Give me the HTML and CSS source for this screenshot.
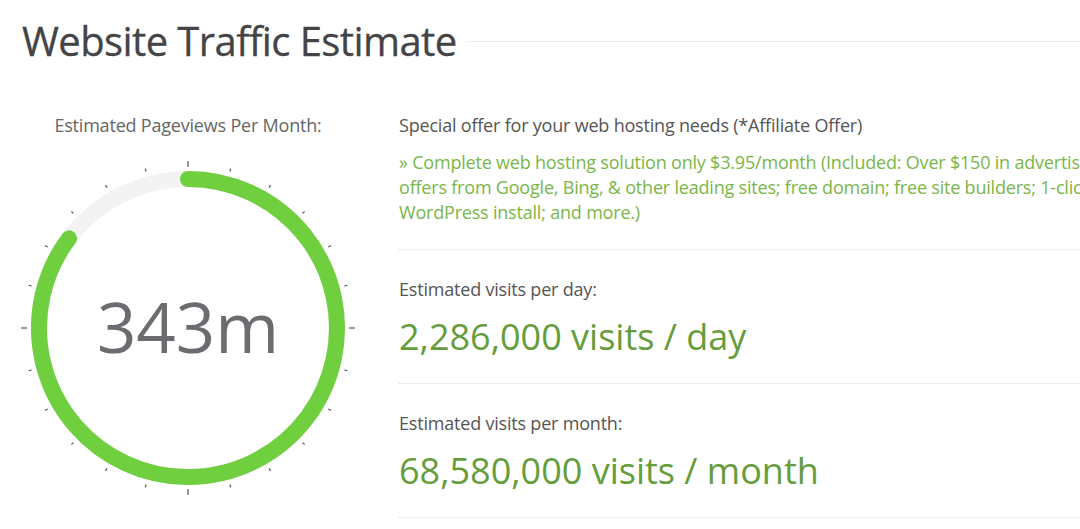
FILE: index.html
```html
<!DOCTYPE html>
<html>
<head>
<meta charset="utf-8">
<link rel="stylesheet" href="styles.css">
</head>
<body>
<div class="page">
  <div class="header">
    <h1 class="title">Website Traffic Estimate</h1>
    <div class="rule"></div>
  </div>
  <div class="main">
    <div class="left">
      <div class="gauge-label">Estimated Pageviews Per Month:</div>
      <div class="gauge">
        <svg width="340" height="340" viewBox="-170 -170 340 340">
          <g id="ticks" stroke="#555" stroke-width="1.2"></g>
          <circle r="149" fill="none" stroke="#f3f3f3" stroke-width="16"></circle>
          <path d="M 0 -149 A 149 149 0 1 1 -119.00 -89.67" fill="none" stroke="#6fcf3f" stroke-width="16" stroke-linecap="round"></path>
          <text x="0" y="25" text-anchor="middle" class="gauge-value">343m</text>
        </svg>
      </div>
    </div>
    <div class="right">
      <div class="section offer">
        <div class="offer-title">Special offer for your web hosting needs (*Affiliate Offer)</div>
        <div class="offer-text">» Complete web hosting solution only $3.95/month (Included: Over $150 in advertising<br>offers from Google, Bing, &amp; other leading sites; free domain; free site builders; 1-click<br>WordPress install; and more.)</div>
      </div>
      <div class="section stat">
        <div class="stat-label">Estimated visits per day:</div>
        <div class="stat-value">2,286,000 visits / day</div>
      </div>
      <div class="section stat">
        <div class="stat-label">Estimated visits per month:</div>
        <div class="stat-value">68,580,000 visits / month</div>
      </div>
    </div>
  </div>
</div>
<script src="script.js"></script>
</body>
</html>
```
FILE: styles.css
```css
html, body {
  margin: 0;
  padding: 0;
  background: #fff;
  overflow: hidden;
}
.page {
  width: 1080px;
  height: 529px;
  overflow: hidden;
  font-family: "Open Sans", "Noto Sans", sans-serif;
}
.header {
  display: flex;
  align-items: center;
  padding: 18px 0 0 22px;
  height: 46px;
}
.title {
  margin: 0;
  font-size: 40px;
  font-weight: 400;
  color: #444446;
  letter-spacing: -0.6px;
  white-space: nowrap;
  line-height: 46px;
  -webkit-text-stroke: 0.3px #444446;
}
.rule {
  flex: 1;
  height: 1px;
  background: #ececec;
  margin-left: 10px;
}
.main {
  display: flex;
  padding-top: 49px;
}
.left {
  width: 376px;
  flex: none;
  display: flex;
  flex-direction: column;
  align-items: center;
}
.gauge-label {
  font-size: 18px;
  color: #666;
  line-height: 24px;
  white-space: nowrap;
  letter-spacing: -0.2px;
}
.gauge {
  margin-top: 21px;
  width: 340px;
  height: 340px;
}
.gauge-value {
  font-family: "Open Sans", "Noto Sans", sans-serif;
  font-size: 69px;
  fill: #6c6c70;
}
.right {
  margin-left: 23px;
  width: 720px;
  flex: none;
}
.section {
  border-bottom: 1px dotted #dcdcdc;
}
.offer {
  padding-bottom: 24px;
}
.offer-title {
  font-size: 18px;
  color: #555;
  line-height: 24px;
  margin-bottom: 12.5px;
  white-space: nowrap;
  letter-spacing: -0.2px;
}
.offer-text {
  font-size: 18px;
  color: #7ab648;
  line-height: 25px;
  white-space: nowrap;
  letter-spacing: -0.2px;
}
.stat {
  padding-top: 27px;
  padding-bottom: 22px;
}
.stat-label {
  font-size: 18px;
  color: #555;
  line-height: 24px;
  letter-spacing: -0.2px;
}
.stat-value {
  font-size: 36px;
  color: #669d3c;
  line-height: 48px;
  margin-top: 12px;
}
```
FILE: script.js
```js
(function () {
  var g = document.getElementById('ticks');
  var ns = 'http://www.w3.org/2000/svg';
  for (var i = 0; i < 24; i++) {
    var a = i * 15 * Math.PI / 180;
    var major = i % 6 === 0;
    var r1 = major ? 161 : 162;
    var r2 = major ? 167 : 165;
    var l = document.createElementNS(ns, 'line');
    l.setAttribute('x1', (Math.sin(a) * r1).toFixed(2));
    l.setAttribute('y1', (-Math.cos(a) * r1).toFixed(2));
    l.setAttribute('x2', (Math.sin(a) * r2).toFixed(2));
    l.setAttribute('y2', (-Math.cos(a) * r2).toFixed(2));
    g.appendChild(l);
  }
})();
```
